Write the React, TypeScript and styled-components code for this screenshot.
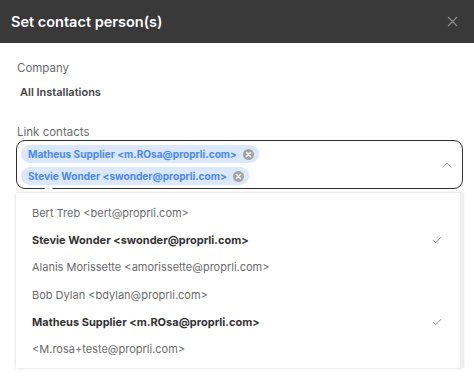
import { FC } from "react";
import styled, { createGlobalStyle } from "styled-components";

const GlobalStyle = createGlobalStyle`
    body {
        margin: 0;
        background: #ffffff;
        font-family: Inter, "Noto Sans", sans-serif;
    }
`;

type Contact = { id: number, label: string, selected: boolean };

const CONTACTS: Contact[] = [
    { id: 1, label: "Bert Treb <bert@proprli.com>", selected: false },
    { id: 2, label: "Stevie Wonder <swonder@proprli.com>", selected: true },
    { id: 3, label: "Alanis Morissette <amorissette@proprli.com>", selected: false },
    { id: 4, label: "Bob Dylan <bdylan@proprli.com>", selected: false },
    { id: 5, label: "Matheus Supplier <m.ROsa@proprli.com>", selected: true },
    { id: 6, label: "<M.rosa+teste@proprli.com>", selected: false },
];

const CHIPS = ["Matheus Supplier <m.ROsa@proprli.com>", "Stevie Wonder <swonder@proprli.com>"];

const CloseIcon = () => (
    <svg width="11" height="11" viewBox="0 0 11 11">
        <path d="M1 1L10 10M10 1L1 10" stroke="#8a8a8a" strokeWidth="1.2" />
    </svg>
);

const ChipClose = () => (
    <svg width="11" height="11" viewBox="0 0 12 12">
        <circle cx="6" cy="6" r="6" fill="#a3a3a3" />
        <path d="M3.8 3.8L8.2 8.2M8.2 3.8L3.8 8.2" stroke="#ffffff" strokeWidth="1.6" strokeLinecap="round" />
    </svg>
);

const Chevron = () => (
    <svg width="10" height="6" viewBox="0 0 10 6">
        <path d="M0.5 5.5L5 1L9.5 5.5" stroke="#b5b5b5" strokeWidth="1" fill="none" />
    </svg>
);

const Check = () => (
    <svg width="10" height="8" viewBox="0 0 10 8">
        <path d="M1 4.2L3.6 6.8L9 1.2" stroke="#8a8a8a" strokeWidth="1" fill="none" />
    </svg>
);

const App: FC = () => {
    return (
        <Dialog>
            <GlobalStyle />
            <Header>
                <Title>Set contact person(s)</Title>
                <CloseIcon />
            </Header>
            <Content>
                <Label>Company</Label>
                <Value>All Installations</Value>
                <Label $gap={26}>Link contacts</Label>
                <SelectBox>
                    <Chips>
                        {CHIPS.map(chip =>
                            <Chip key={chip}>{chip}<ChipClose /></Chip>
                        )}
                    </Chips>
                    <Chevron />
                </SelectBox>
                <Menu>
                    {CONTACTS.map(contact =>
                        <Option key={contact.id} $selected={contact.selected}>
                            <span>{contact.label}</span>
                            {contact.selected && <Check />}
                        </Option>
                    )}
                </Menu>
            </Content>
        </Dialog>
    );
};

export default App;

const Dialog = styled.div`
    width: 474px;
    height: 379px;
    overflow: hidden;
    background: #ffffff;
`;

const Header = styled.div`
    height: 43px;
    background: #393939;
    display: flex;
    align-items: center;
    justify-content: space-between;
    padding: 0 16px 0 11px;
    box-sizing: border-box;
`;

const Title = styled.h2`
    margin: 0;
    color: #ffffff;
    font-size: 14.5px;
    font-weight: 600;
`;

const Content = styled.div`
    padding: 18px 11px 0 16px;
    display: flex;
    flex-direction: column;
`;

const Label = styled.div<{ $gap?: number }>`
    margin-top: ${p => p.$gap ?? 0}px;
    padding-left: 1px;
    font-size: 11.5px;
    line-height: 14px;
    color: #6b6b6b;
`;

const Value = styled.div`
    margin-top: 10px;
    padding-left: 4px;
    font-size: 11px;
    line-height: 14px;
    font-weight: 600;
    color: #444444;
`;

const SelectBox = styled.div`
    margin-top: 1px;
    height: 49px;
    box-sizing: border-box;
    border: 1px solid #2f2f2f;
    border-radius: 9px;
    display: flex;
    align-items: center;
    justify-content: space-between;
    padding: 1px 10px 0 4px;
    position: relative;

    &::after {
        content: "";
        position: absolute;
        left: 28px;
        bottom: -5px;
        width: 7px;
        height: 7px;
        background: #ffffff;
        transform: rotate(45deg);
        box-shadow: -1px -1px 1px rgba(0, 0, 0, 0.05);
    }
`;

const Chips = styled.div`
    display: flex;
    flex-direction: column;
    align-items: flex-start;
    gap: 4px;
`;

const Chip = styled.div`
    display: flex;
    align-items: center;
    gap: 6px;
    height: 18px;
    padding: 0 5px 0 7px;
    border-radius: 9px;
    background: #dbe8fb;
    color: #4a8af0;
    font-size: 10.1px;
    font-weight: 700;
`;

const Menu = styled.div`
    margin-top: 4px;
    width: 447px;
    box-sizing: border-box;
    padding: 6px 0 5px;
    background: #ffffff;
    border-right: 3px solid #efefef;
    box-shadow: 0 0 3px rgba(0, 0, 0, 0.18);
    position: relative;
    z-index: 1;
`;

const Option = styled.div<{ $selected: boolean }>`
    height: 27.3px;
    display: flex;
    align-items: center;
    justify-content: space-between;
    padding: 0 18px 0 16px;
    font-size: 11px;
    font-weight: ${p => p.$selected ? 700 : 400};
    color: ${p => p.$selected ? "#333333" : "#6b6b6b"};
`;
